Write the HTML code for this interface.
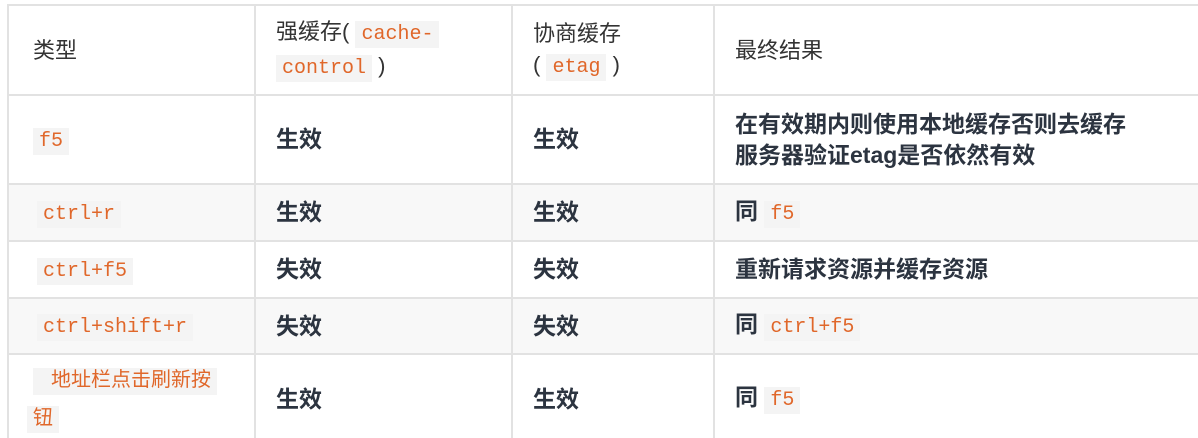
<!DOCTYPE html>
<html><head><meta charset="utf-8"><style>
html,body{margin:0;padding:0;background:#fff;width:1198px;height:438px;overflow:hidden;position:relative}
table{position:absolute;left:7px;top:4px;border-collapse:collapse;table-layout:fixed;width:1300px;font-family:"Liberation Sans","Noto Sans CJK SC",sans-serif;color:#2c3440;font-size:23px;font-weight:bold}
td{border:2px solid #e2e2e2;padding:0 0 0 20px;vertical-align:middle;line-height:31px;overflow:hidden;white-space:nowrap}
tr.alt td{background:#f8f8f8}
code{font-family:"Liberation Mono","Noto Sans CJK SC",monospace;color:#e0672a;background:#f4f4f4;font-weight:normal;font-size:20px;padding:2px 6px}
.h td{font-weight:normal;color:#333;font-size:22px}
</style></head><body>
<table>
<colgroup><col style="width:247px"><col style="width:257px"><col style="width:202px"><col style="width:594px"></colgroup>
<tr class="h" style="height:90px"><td style="padding-left:24px">类型</td><td>强缓存( <code>cache-</code><br><code>control</code> )</td><td>协商缓存<br>( <code>etag</code> )</td><td>最终结果</td></tr>
<tr style="height:89px"><td style="padding-left:24px"><code>f5</code></td><td>生效</td><td>生效</td><td>在有效期内则使用本地缓存否则去缓存<br>服务器验证etag是否依然有效</td></tr>
<tr class="alt" style="height:57px"><td style="padding-left:28px"><code>ctrl+r</code></td><td>生效</td><td>生效</td><td>同 <code>f5</code></td></tr>
<tr style="height:57px"><td style="padding-left:28px"><code>ctrl+f5</code></td><td>失效</td><td>失效</td><td>重新请求资源并缓存资源</td></tr>
<tr class="alt" style="height:56px"><td style="padding-left:28px"><code>ctrl+shift+r</code></td><td>失效</td><td>失效</td><td>同 <code>ctrl+f5</code></td></tr>
<tr style="height:90px"><td style="line-height:34px;padding-left:24px"><code>&nbsp;地址栏点击刷新按</code><br><code style="margin-left:-6px">钮</code></td><td>生效</td><td>生效</td><td>同 <code>f5</code></td></tr>
</table>
</body></html>
